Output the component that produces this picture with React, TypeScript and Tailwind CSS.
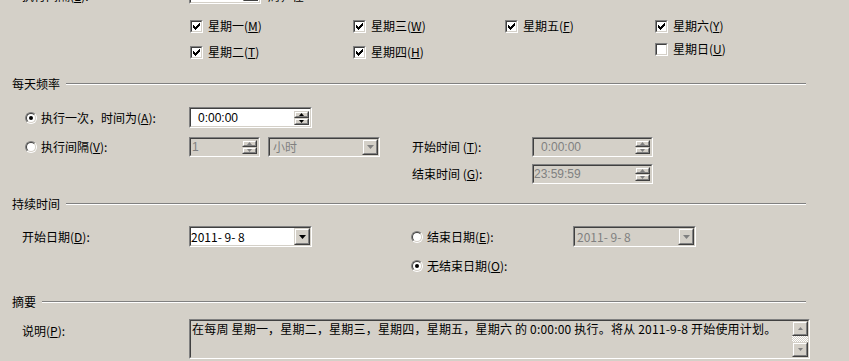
import React from "react";

const SUNKEN_OUT = "border border-t-[#808080] border-l-[#808080] border-b-white border-r-white";
const SUNKEN_IN = "border border-t-[#404040] border-l-[#404040] border-b-[#d4d0c8] border-r-[#d4d0c8]";
const RAISED_OUT = "border border-t-[#d4d0c8] border-l-[#d4d0c8] border-b-[#404040] border-r-[#404040]";
const RAISED_IN = "border border-t-white border-l-white border-b-[#808080] border-r-[#808080] bg-[#d4d0c8]";

function Mn({ c }: { c: string }) {
  return (
    <>
      (<span className="underline underline-offset-[1px]">{c}</span>)
    </>
  );
}

function Check({ on }: { on: boolean }) {
  return (
    <span className={`flex w-[13px] h-[13px] shrink-0 ${SUNKEN_OUT}`}>
      <span className={`flex flex-1 items-center justify-center bg-white ${SUNKEN_IN}`}>
        {on && (
          <svg width="7" height="7" viewBox="0 0 7 7" shapeRendering="crispEdges">
            <polygon points="0,2 2,4 7,-1 7,2 2,7 0,5" fill="#000" />
          </svg>
        )}
      </span>
    </span>
  );
}

function Radio({ on }: { on: boolean }) {
  return (
    <span className="flex w-[12px] h-[12px] shrink-0 rounded-full border border-t-[#808080] border-l-[#808080] border-b-white border-r-white">
      <span className="flex flex-1 items-center justify-center rounded-full bg-white border border-t-[#404040] border-l-[#404040] border-b-[#d4d0c8] border-r-[#d4d0c8]">
        {on && <span className="w-[4px] h-[4px] rounded-full bg-black" />}
      </span>
    </span>
  );
}

function Arrow({ dir, off, size = 5 }: { dir: "up" | "down"; off?: boolean; size?: number }) {
  const h = Math.ceil(size / 2);
  const pts = dir === "up" ? `0,${h} ${size},${h} ${size / 2},0` : `0,0 ${size},0 ${size / 2},${h}`;
  return (
    <svg width={size} height={h} viewBox={`0 0 ${size} ${h}`}>
      <polygon points={pts} fill={off ? "#808080" : "#000"} />
    </svg>
  );
}

function Btn({ children, className = "" }: { children?: React.ReactNode; className?: string }) {
  return (
    <span className={`flex ${RAISED_OUT} ${className}`}>
      <span className={`flex flex-1 items-center justify-center ${RAISED_IN}`}>{children}</span>
    </span>
  );
}

function Spin({ off }: { off?: boolean }) {
  return (
    <span className="flex flex-col w-[15px] h-[14px] shrink-0 mr-[1px]">
      <Btn className="flex-1">
        <Arrow dir="up" off={off} />
      </Btn>
      <Btn className="flex-1">
        <Arrow dir="down" off={off} />
      </Btn>
    </span>
  );
}

function Field({
  w,
  h = 20,
  off,
  children,
  right,
  pad = "pl-0",
}: {
  w: string;
  h?: number;
  off?: boolean;
  children?: React.ReactNode;
  right?: React.ReactNode;
  pad?: string;
}) {
  return (
    <div className={`flex shrink-0 ${w} ${SUNKEN_OUT}`} style={{ height: h }}>
      <div className={`flex flex-1 items-center ${SUNKEN_IN} ${off ? "bg-[#d4d0c8] text-[#808080]" : "bg-white"}`}>
        <span className={`flex-1 whitespace-pre ${pad}`}>{children}</span>
        {right}
      </div>
    </div>
  );
}

function Drop({ off }: { off?: boolean }) {
  return (
    <Btn className="w-[16px] h-full shrink-0">
      <Arrow dir="down" off={off} size={7} />
    </Btn>
  );
}

function Section({ title, className = "" }: { title: string; className?: string }) {
  return (
    <div className={`flex items-center h-4 gap-[6px] pl-[12px] w-[806px] ${className}`}>
      <span>{title}</span>
      <div className="flex-1 border-t border-t-[#808080] border-b border-b-white" />
    </div>
  );
}

function Day({ label, k, on }: { label: string; k: string; on: boolean }) {
  return (
    <div className="flex items-center gap-[5px] h-4">
      <Check on={on} />
      <span>
        {label}
        <Mn c={k} />
      </span>
    </div>
  );
}

const TIME = "font-['Liberation_Sans',sans-serif]";

export default function App() {
  return (
    <div className="w-[849px] h-[361px] overflow-hidden bg-[#d4d0c8] text-[12px] leading-none text-black font-['Noto_Sans_CJK_SC',sans-serif]">
      {/* repeat interval, cut off at the top */}
      <div className="flex items-center h-[21px] -mt-[17px] pl-[22px]">
        <span className="w-[167px] pt-[5px]">
          执行间隔<Mn c="E" />:
        </span>
        <Field w="w-[72px]" h={21} right={<Spin />} />
        <span className="ml-[7px] pt-[5px]">周，在</span>
      </div>

      {/* days of week */}
      <div className="flex mt-[14px] pl-[190px]">
        <div className="flex flex-col gap-[10px] w-[163px]">
          <Day label="星期一" k="M" on />
          <Day label="星期二" k="T" on />
        </div>
        <div className="flex flex-col gap-[10px] w-[152px]">
          <Day label="星期三" k="W" on />
          <Day label="星期四" k="H" on />
        </div>
        <div className="flex flex-col gap-[10px] w-[150px]">
          <Day label="星期五" k="F" on />
        </div>
        <div className="flex flex-col gap-[7px]">
          <Day label="星期六" k="Y" on />
          <Day label="星期日" k="U" on={false} />
        </div>
      </div>

      <Section title="每天频率" className="mt-[16px]" />

      <div className="flex items-center h-[21px] mt-[15px] pl-[25px]">
        <div className="flex items-center gap-[4px] w-[164px]">
          <Radio on />
          <span>
            执行一次，时间为<Mn c="A" />:
          </span>
        </div>
        <Field w="w-[123px]" h={21} pad={`pl-[7px] ${TIME}`} right={<Spin />}>
          0:00:00
        </Field>
      </div>

      <div className="flex items-center h-[20px] mt-[9px] pl-[25px]">
        <div className="flex items-center gap-[4px] w-[164px]">
          <Radio on={false} />
          <span>
            执行间隔<Mn c="V" />:
          </span>
        </div>
        <Field w="w-[71px]" off pad={`pl-[1px] ${TIME}`} right={<Spin off />}>
          1
        </Field>
        <div className="ml-[8px] h-full">
          <Field w="w-[112px]" off pad="pl-[3px]" right={<Drop off />}>
            小时
          </Field>
        </div>
        <span className="ml-[32px] w-[120px]">
          开始时间 <Mn c="T" />:
        </span>
        <Field w="w-[121px]" off pad={`pl-[7px] ${TIME}`} right={<Spin off />}>
          0:00:00
        </Field>
      </div>

      <div className="flex items-center h-[20px] mt-[7px] pl-[412px]">
        <span className="w-[120px]">
          结束时间 <Mn c="G" />:
        </span>
        <Field w="w-[121px]" off pad={TIME} right={<Spin off />}>
          23:59:59
        </Field>
      </div>

      <Section title="持续时间" className="mt-[12px]" />

      <div className="flex items-center h-[21px] mt-[14px] pl-[22px]">
        <span className="w-[167px]">
          开始日期<Mn c="D" />:
        </span>
        <Field w="w-[123px]" h={21} right={<Drop />}>
          2011- 9- 8
        </Field>
        <div className="flex items-center gap-[4px] ml-[99px] w-[162px]">
          <Radio on={false} />
          <span>
            结束日期<Mn c="E" />:
          </span>
        </div>
        <Field w="w-[123px]" h={21} off pad="pl-[2px]" right={<Drop off />}>
          2011- 9- 8
        </Field>
      </div>

      <div className="flex items-center gap-[4px] h-4 mt-[11px] pl-[411px]">
        <Radio on />
        <span>
          无结束日期<Mn c="O" />:
        </span>
      </div>

      <Section title="摘要" className="mt-[20px]" />

      <div className="flex mt-[9px] pl-[22px]">
        <span className="w-[167px] pt-[6px]">
          说明<Mn c="P" />:
        </span>
        <div className={`flex w-[621px] h-[40px] ${SUNKEN_OUT}`}>
          <div className={`flex flex-1 ${SUNKEN_IN}`}>
            <p className="flex-1 pt-[2px] pl-[1px] whitespace-pre tracking-[0.2px]">
              在每周 星期一，星期二，星期三，星期四，星期五，星期六 的 0:00:00 执行。将从 2011-9-8 开始使用计划。
            </p>
            <div className="flex flex-col w-[16px]">
              <Btn className="h-[15px]">
                <Arrow dir="up" off />
              </Btn>
              <div className="flex-1 bg-[repeating-conic-gradient(#d4d0c8_0_25%,#ffffff_0_50%)] bg-[length:2px_2px]" />
              <Btn className="h-[15px]">
                <Arrow dir="down" off />
              </Btn>
            </div>
          </div>
        </div>
      </div>
    </div>
  );
}
